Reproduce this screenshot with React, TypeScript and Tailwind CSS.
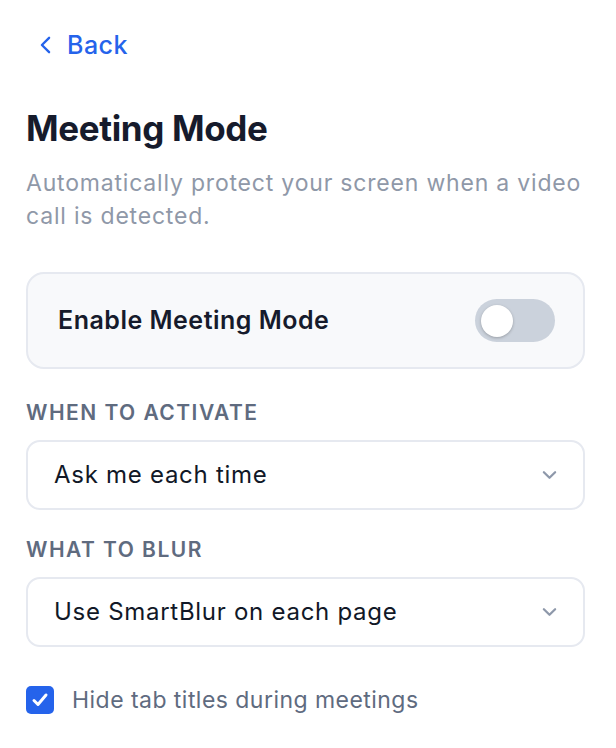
import React, { useState } from "react";

const FONT = "font-['Inter','Noto_Sans',sans-serif]";

function Chevron({ className = "" }: { className?: string }) {
  return (
    <svg
      viewBox="0 0 16 10"
      className={className}
      fill="none"
      stroke="currentColor"
      strokeWidth={2.4}
      strokeLinecap="round"
      strokeLinejoin="round"
    >
      <path d="M2 2l6 6 6-6" />
    </svg>
  );
}

interface SelectProps {
  label: string;
  value: string;
}

function SelectField({ label, value }: SelectProps) {
  return (
    <div className="flex flex-col">
      <div className="text-[21px] leading-[24px] font-semibold tracking-[0.07em] text-[#5f6b7f] uppercase">
        {label}
      </div>
      <button className="mt-[15px] h-[70px] w-full flex items-center justify-between rounded-[14px] border-2 border-[#e6e9f0] bg-white pl-[26px] pr-[26px]">
        <span className="text-[24px] tracking-[0.03em] text-[#111827]">{value}</span>
        <Chevron className="w-[15px] h-[10px] text-[#8e98aa]" />
      </button>
    </div>
  );
}

export default function App() {
  const [enabled, setEnabled] = useState(false);
  const [hideTitles, setHideTitles] = useState(true);

  return (
    <div className={`${FONT} min-h-screen bg-white pl-[26px] pr-[31px] pt-[28px] text-[#111827]`}>
      {/* Back link */}
      <button className="flex items-center gap-[16px] pl-[14px] text-[#2563eb]">
        <svg
          viewBox="0 0 12 20"
          className="w-[11px] h-[18px]"
          fill="none"
          stroke="currentColor"
          strokeWidth={2.6}
          strokeLinecap="round"
          strokeLinejoin="round"
        >
          <path d="M10 2L2 10l8 8" />
        </svg>
        <span className="text-[25px] leading-[34px] font-medium tracking-[0.02em]">Back</span>
      </button>

      {/* Heading */}
      <h1 className="mt-[46px] text-[35px] leading-[40px] font-bold tracking-[-0.01em] text-[#161b2c]">
        Meeting Mode
      </h1>
      <p className="mt-[19px] text-[23px] leading-[33px] tracking-[0.035em] text-[#8f98a8]">
        Automatically protect your screen when a video call is detected.
      </p>

      {/* Enable toggle card */}
      <div className="mt-[39px] h-[97px] flex items-center justify-between rounded-[18px] border-2 border-[#e6e9f0] bg-[#f8f9fb] pl-[30px] pr-[28px]">
        <span className="text-[25px] font-semibold tracking-[0.02em] text-[#161b2c]">
          Enable Meeting Mode
        </span>
        <button
          onClick={() => setEnabled(!enabled)}
          className={`relative w-[80px] h-[43px] rounded-full ${enabled ? "bg-[#2563eb]" : "bg-[#cbd2dc]"}`}
        >
          <span
            className={`absolute top-[6px] w-[32px] h-[32px] rounded-full bg-white shadow-[0_1px_3px_rgba(0,0,0,0.25)] ${
              enabled ? "left-[42px]" : "left-[6px]"
            }`}
          />
        </button>
      </div>

      <div className="mt-[32px] flex flex-col gap-[28px]">
        <SelectField label="When to activate" value="Ask me each time" />
        <SelectField label="What to blur" value="Use SmartBlur on each page" />
      </div>

      {/* Checkbox */}
      <label className="mt-[36px] flex items-center gap-[18px]">
        <button
          onClick={() => setHideTitles(!hideTitles)}
          className={`w-[28px] h-[28px] flex items-center justify-center rounded-[5px] ${
            hideTitles ? "bg-[#2563eb]" : "border-2 border-[#cbd2dc] bg-white"
          }`}
        >
          {hideTitles && (
            <svg
              viewBox="0 0 20 20"
              className="w-[20px] h-[20px]"
              fill="none"
              stroke="white"
              strokeWidth={3}
              strokeLinecap="round"
              strokeLinejoin="round"
            >
              <path d="M4 10.5l4 4L16 5" />
            </svg>
          )}
        </button>
        <span className="text-[23px] tracking-[0.02em] text-[#5f6b7f]">
          Hide tab titles during meetings
        </span>
      </label>
    </div>
  );
}
